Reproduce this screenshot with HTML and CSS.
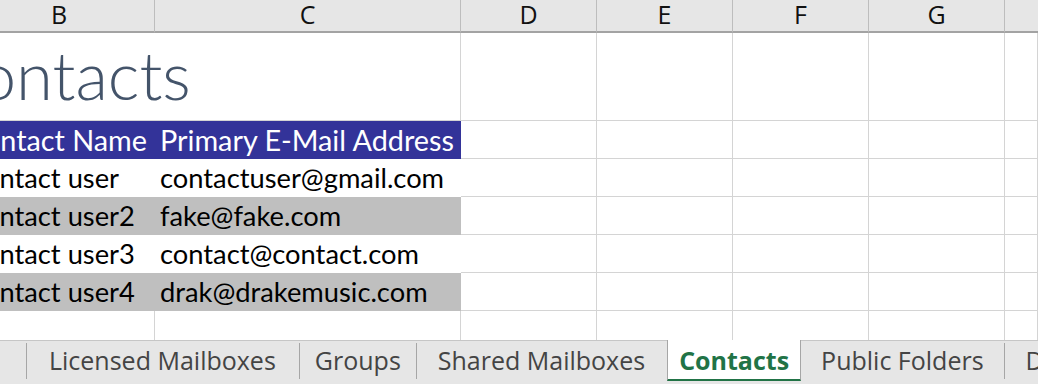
FILE: index.html
```html
<!DOCTYPE html>
<html>
<head>
<meta charset="utf-8">
<link rel="stylesheet" href="styles.css">
</head>
<body>
<div class="app">
  <div class="sheet">
    <div class="row colhead">
      <div class="c cb">B</div>
      <div class="c cc">C</div>
      <div class="c cd">D</div>
      <div class="c ce">E</div>
      <div class="c cf">F</div>
      <div class="c cg">G</div>
      <div class="c ch"></div>
    </div>
    <div class="row title-row">
      <div class="c cbc title">Contacts</div>
      <div class="c cd"></div>
      <div class="c ce"></div>
      <div class="c cf"></div>
      <div class="c cg"></div>
      <div class="c ch"></div>
    </div>
    <div class="row data">
      <div class="c cb tb th">Contact Name</div>
      <div class="c cc tb th">Primary E-Mail Address</div>
      <div class="c cd"></div>
      <div class="c ce"></div>
      <div class="c cf"></div>
      <div class="c cg"></div>
      <div class="c ch"></div>
    </div>
    <div class="row data">
      <div class="c cb tb">Contact user</div>
      <div class="c cc tb">contactuser@gmail.com</div>
      <div class="c cd"></div>
      <div class="c ce"></div>
      <div class="c cf"></div>
      <div class="c cg"></div>
      <div class="c ch"></div>
    </div>
    <div class="row data">
      <div class="c cb tb alt">Contact user2</div>
      <div class="c cc tb alt">fake@fake.com</div>
      <div class="c cd"></div>
      <div class="c ce"></div>
      <div class="c cf"></div>
      <div class="c cg"></div>
      <div class="c ch"></div>
    </div>
    <div class="row data">
      <div class="c cb tb">Contact user3</div>
      <div class="c cc tb">contact@contact.com</div>
      <div class="c cd"></div>
      <div class="c ce"></div>
      <div class="c cf"></div>
      <div class="c cg"></div>
      <div class="c ch"></div>
    </div>
    <div class="row data">
      <div class="c cb tb alt">Contact user4</div>
      <div class="c cc tb alt">drak@drakemusic.com</div>
      <div class="c cd"></div>
      <div class="c ce"></div>
      <div class="c cf"></div>
      <div class="c cg"></div>
      <div class="c ch"></div>
    </div>
    <div class="row last">
      <div class="c cb"></div>
      <div class="c cc"></div>
      <div class="c cd"></div>
      <div class="c ce"></div>
      <div class="c cf"></div>
      <div class="c cg"></div>
      <div class="c ch"></div>
    </div>
  </div>
  <div class="tabs">
    <div class="tab lead"></div>
    <div class="tab wide">Licensed Mailboxes</div>
    <div class="tab tight">Groups</div>
    <div class="tab">Shared Mailboxes</div>
    <div class="tab active">Contacts</div>
    <div class="tab snug">Public Folders</div>
    <div class="tab cut">D</div>
  </div>
</div>
</body>
</html>
```
FILE: styles.css
```css
html, body {
  margin: 0;
  padding: 0;
  background: #ffffff;
}
body {
  width: 1038px;
  height: 384px;
  overflow: hidden;
  font-family: "Lato", "Open Sans", sans-serif;
}
.app {
  width: 1038px;
  height: 384px;
  display: flex;
  flex-direction: column;
  overflow: hidden;
}
.sheet {
  flex: 0 0 340px;
  margin-left: -36px;
  width: 1074px;
  overflow: hidden;
}
.row {
  display: grid;
  grid-template-columns: 191px 306px 136px 136px 136px 136px 1fr;
}
.c {
  box-sizing: border-box;
  border-right: 1px solid #d4d4d4;
  border-bottom: 1px solid #d4d4d4;
  white-space: nowrap;
  overflow: visible;
}
.cbc { grid-column: 1 / span 2; }

.colhead {
  height: 33px;
  background: #e6e6e6;
}
.colhead .c {
  border-right: 1px solid #bdbdbd;
  border-bottom: 2px solid #a3a3a3;
  text-align: center;
  font-family: "Open Sans", "Noto Sans", sans-serif;
  font-size: 25px;
  line-height: 29px;
  color: #111111;
}
.colhead .ch { border-right: none; }

.title-row { height: 88px; }
.title {
  font-family: "Lato", sans-serif;
  font-weight: 300;
  font-size: 67px;
  color: #44546a;
  text-indent: -30px;
  line-height: 82px;
}

.data { height: 38px; }
.last { height: 29px; }
.last .c { border-bottom: none; }

.tb {
  border-right: none;
  border-bottom: none;
  background: #ffffff;
  font-size: 27.3px;
  line-height: 38px;
  color: #000000;
  padding-left: 5px;
}
.cb.tb { padding-left: 2px; }
.cc.tb { border-right: 1px solid transparent; }
.th {
  background: #333399;
  color: #ffffff;
  font-size: 28.8px;
}
.cb.th { padding-left: 1px; }
.alt { background: #bfbfbf; }

.tabs {
  flex: 1 1 auto;
  display: flex;
  align-items: flex-start;
  background: #e6e6e6;
  border-top: 1px solid #c6c6c6;
  font-family: "Open Sans", "Noto Sans", sans-serif;
  font-size: 25px;
  line-height: 34px;
  color: #444444;
}
.tab {
  flex: 0 0 auto;
  box-sizing: border-box;
  padding: 2px 22px 0;
  height: 39px;
  position: relative;
  white-space: nowrap;
}
.tab.wide { padding: 2px 23px 0; }
.tab.tight { padding: 2px 15px 0 16px; }
.tab.snug { padding: 2px 20px 0; }
.tab + .tab::before {
  content: "";
  position: absolute;
  left: 0;
  top: 2px;
  height: 36px;
  border-left: 1px solid #a6a6a6;
}
.tab.lead { width: 26px; padding: 0; }
.tab.active {
  background: #ffffff;
  color: #217346;
  font-weight: 700;
  border-left: 1px solid #a6a6a6;
  border-right: 1px solid #a6a6a6;
  border-bottom: 2px solid #217346;
  margin-top: -1px;
  height: 41px;
  padding: 3px 11px 0;
}
.tab.active::before, .tab.active + .tab::before { display: none; }
```
